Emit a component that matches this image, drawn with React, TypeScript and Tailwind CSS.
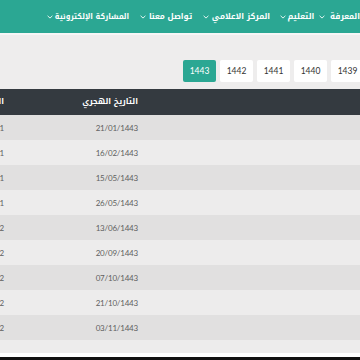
import React from "react";

const hijri = [
  ["21/01/1443", "29/08/2021"],
  ["16/02/1443", "23/09/2021"],
  ["15/05/1443", "19/12/2021"],
  ["26/05/1443", "30/12/2021"],
  ["13/06/1443", "16/01/2022"],
  ["20/09/1443", "21/04/2022"],
  ["07/10/1443", "08/05/2022"],
  ["21/10/1443", "22/05/2022"],
  ["03/11/1443", "02/06/2022"],
];

const Chevron = () => (
  <svg width="6" height="4" viewBox="0 0 6 4" className="shrink-0">
    <path d="M0.6 0.8 L3 3.1 L5.4 0.8" fill="none" stroke="#e3f5f1" strokeWidth="1" />
  </svg>
);

export default function App() {
  const arab = "font-['Noto_Kufi_Arabic','Noto_Sans_Arabic','Noto_Naskh_Arabic','DejaVu_Sans',sans-serif]";
  const num = "font-['Lato','Open_Sans',sans-serif]";
  return (
    <div className="w-[360px] h-[360px] overflow-hidden bg-[#eeeded] flex flex-col">
      {/* header */}
      <div className={`h-[33px] bg-[#2ba793] flex items-center text-white font-bold text-[8px] ${arab} pl-[47px] shrink-0`} dir="ltr">
        <Chevron />
        <span className="w-[66px] ml-[6px] flex justify-center whitespace-nowrap text-[7.5px]" dir="rtl">المشاركة الإلكترونية</span>
        <span className="ml-[15px]"><Chevron /></span>
        <span className="w-[41px] ml-[4px] flex justify-center whitespace-nowrap" dir="rtl">تواصل معنا</span>
        <span className="ml-[12px]"><Chevron /></span>
        <span className="w-[54px] ml-[5px] flex justify-center whitespace-nowrap" dir="rtl">المركز الاعلامي</span>
        <span className="ml-[12px]"><Chevron /></span>
        <span className="w-[20px] ml-[5px] flex justify-center whitespace-nowrap" dir="rtl">التعليم</span>
        <span className="ml-[8px]"><Chevron /></span>
        <span className="w-[48px] ml-[5px] text-right whitespace-nowrap" dir="rtl">المعرفة</span>
      </div>
      <div className="h-[2px] bg-[#f6f6f6] shrink-0" />

      {/* year buttons */}
      <div className={`flex gap-[4px] pl-[183px] mt-[25px] ${num} text-[8.5px] shrink-0`}>
        <div className="w-[33px] h-[22px] rounded-[2px] bg-[#2ba793] text-white flex items-center justify-center shrink-0">1443</div>
        {["1442", "1441", "1440", "1439"].map((y) => (
          <div key={y} className="w-[33px] h-[22px] rounded-[2px] bg-white text-[#333] flex items-center justify-center shrink-0">{y}</div>
        ))}
      </div>

      {/* table */}
      <div className="mt-[7px] flex flex-col shrink-0">
        <div className="h-[26px] bg-[#343a40] flex items-center text-white">
          <div className={`w-[64px] -ml-[60px] text-right text-[8px] font-bold ${arab} whitespace-nowrap`} dir="rtl">التاريخ الميلادي</div>
          <div className={`w-[134px] text-right text-[8px] font-bold ${arab} whitespace-nowrap`} dir="rtl">التاريخ الهجري</div>
        </div>
        {hijri.map(([h, g], i) => (
          <div key={i} className={`h-[25px] flex items-center text-[#5f5f5f] text-[8px] tracking-[-0.2px] ${num} ${i % 2 === 0 ? "bg-[#e1e0e0]" : "bg-[#edecec]"}`}>
            <div className="w-[64px] -ml-[60px] text-right">{g}</div>
            <div className="w-[134px] text-right">{h}</div>
          </div>
        ))}
        <div className="h-[13px] bg-[#edecec]" />
        <div className="h-[4px] bg-white" />
        <div className="h-[10px] bg-[#111]" />
      </div>
    </div>
  );
}
